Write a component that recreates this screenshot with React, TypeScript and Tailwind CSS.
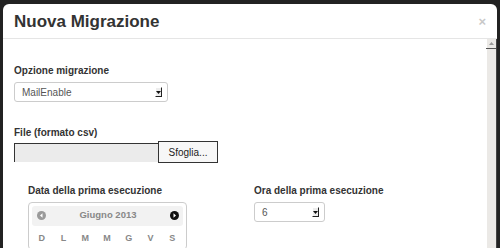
import React from "react";

const font = { fontFamily: '"Liberation Sans", Arial, sans-serif' };

function SelectArrow() {
  return (
    <div className="w-[7px] h-[10px] bg-[#ededed] border-t border-l border-white border-r border-b border-r-[#222] border-b-[#222] flex items-center justify-center">
      <svg width="5" height="3" viewBox="0 0 5 3">
        <path d="M0 0 L5 0 L2.5 3 Z" fill="#111" />
      </svg>
    </div>
  );
}

function CircleArrow({ dir, color }: { dir: "l" | "r"; color: string }) {
  return (
    <svg width="9" height="9" viewBox="0 0 9 9">
      <circle cx="4.5" cy="4.5" r="4.5" fill={color} />
      {dir === "l" ? (
        <path d="M5.5 2.3 L3 4.5 L5.5 6.7 Z" fill="#fff" />
      ) : (
        <path d="M3.5 2.3 L6 4.5 L3.5 6.7 Z" fill="#fff" />
      )}
    </svg>
  );
}

export default function App() {
  const days = ["D", "L", "M", "M", "G", "V", "S"];
  return (
    <div
      className="w-[500px] h-[248px] bg-[#222] overflow-hidden pt-[4px] pl-[3px] pr-[3px]"
      style={font}
    >
      <div className="bg-white rounded-t-[6px] h-[300px] flex flex-col">
        <div className="h-[35px] border-b border-[#e5e5e5] flex items-center justify-between pl-[11px] pr-[11px]">
          <div className="text-[17px] font-bold text-[#333] leading-none">Nuova Migrazione</div>
          <div className="text-[13px] font-bold text-[#c8c8c8] leading-none">×</div>
        </div>
        <div className="flex flex-1">
          <div className="flex-1 pl-[11px]">
            <div className="mt-[25px] text-[10px] font-bold text-[#333] leading-[14px]">
              Opzione migrazione
            </div>
            <div className="mt-[4px] w-[154px] h-[20px] border border-[#ccc] rounded-[3px] flex items-center justify-between pl-[7px] pr-[5px]">
              <span className="text-[10px] text-[#555]">MailEnable</span>
              <SelectArrow />
            </div>
            <div className="mt-[24px] text-[10px] font-bold text-[#333] leading-[14px]">
              File (formato csv)
            </div>
            <div className="mt-[1px] flex items-stretch h-[22px]">
              <div className="w-[144px] mt-[2px] mb-[1px] bg-[#ebebeb] border-t border-l border-[#333]" />
              <div className="w-[60px] border border-[#333] bg-[#f7f7f7] flex items-center justify-center text-[10px] text-[#222]">
                Sfoglia...
              </div>
            </div>
            <div className="flex pl-[14px] mt-[21px]">
              <div className="w-[226px]">
                <div className="text-[10px] font-bold text-[#333] leading-[14px]">
                  Data della prima esecuzione
                </div>
                <div className="mt-[4px] w-[159px] border border-[#ccc] rounded-[4px] p-[3px]">
                  <div className="h-[20px] bg-[#f2f2f2] rounded-[3px] flex items-center justify-between pl-[5px] pr-[4px] pb-[2px]">
                    <CircleArrow dir="l" color="#9a9a9a" />
                    <span className="text-[9.5px] font-bold text-[#888]">Giugno 2013</span>
                    <CircleArrow dir="r" color="#111" />
                  </div>
                  <div className="flex -ml-[1px] mt-[6px]">
                    {days.map((d, i) => (
                      <div key={i} className="w-[22.2px] text-center text-[9px] font-bold text-[#888]">
                        {d}
                      </div>
                    ))}
                  </div>
                </div>
              </div>
              <div>
                <div className="text-[10px] font-bold text-[#333] leading-[14px]">
                  Ora della prima esecuzione
                </div>
                <div className="mt-[4px] w-[71px] h-[20px] border border-[#ccc] rounded-[3px] flex items-center justify-between pl-[7px] pr-[5px]">
                  <span className="text-[10px] text-[#555]">6</span>
                  <SelectArrow />
                </div>
              </div>
            </div>
          </div>
          <div className="w-[10px] bg-[#ebe9e6] flex flex-col border-r border-[#444]">
            <div className="h-[9px] flex items-center justify-center">
              <svg width="5" height="3" viewBox="0 0 5 3">
                <path d="M2.5 0 L5 3 L0 3 Z" fill="#999" />
              </svg>
            </div>
            <div className="h-[1px] bg-[#555] -ml-[1px]" />
          </div>
        </div>
      </div>
    </div>
  );
}
